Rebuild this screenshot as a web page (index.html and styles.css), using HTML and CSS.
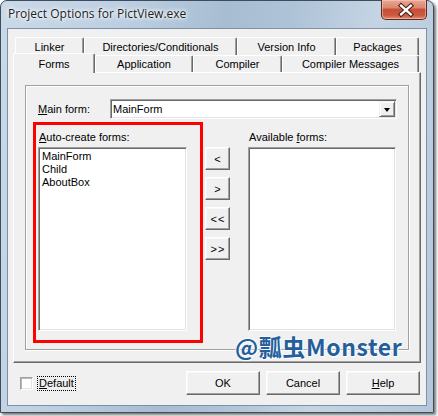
FILE: index.html
```html
<!DOCTYPE html>
<html>
<head>
<meta charset="utf-8">
<link rel="stylesheet" href="styles.css">
</head>
<body>
<div class="window">
  <div class="titlebar">
    <span class="title">Project Options for PictView.exe</span>
    <div class="close">
      <svg width="46" height="20" viewBox="0 0 46 20">
        <path d="M20.5 5.5 L30.5 14.5 M30.5 5.5 L20.5 14.5" stroke="#4a2018" stroke-width="4.6" stroke-linecap="square" fill="none"/>
        <path d="M20.5 5.5 L30.5 14.5 M30.5 5.5 L20.5 14.5" stroke="#ffffff" stroke-width="2.4" stroke-linecap="square" fill="none"/>
      </svg>
    </div>
  </div>
  <div class="client">
    <div class="tabctl">
      <div class="tabrow row1">
        <div class="tab w-linker">Linker</div>
        <div class="tab w-dirs">Directories/Conditionals</div>
        <div class="tab w-ver">Version Info</div>
        <div class="tab w-pkg">Packages</div>
      </div>
      <div class="tabrow row2">
        <div class="tab sel w-forms">Forms</div>
        <div class="tab w-app">Application</div>
        <div class="tab w-comp">Compiler</div>
        <div class="tab w-msg">Compiler Messages</div>
      </div>
      <div class="page">
        <div class="panel">
          <div class="mainrow">
            <div class="lbl mainlbl"><u>M</u>ain form:</div>
            <div class="combo">
              <span class="combotext">MainForm</span>
              <div class="dd"><span class="tri"></span></div>
            </div>
          </div>
          <div class="lists">
            <div class="col colleft">
              <div class="lbl listlbl"><u>A</u>uto-create forms:</div>
              <div class="listbox">
                <div class="item">MainForm</div>
                <div class="item">Child</div>
                <div class="item">AboutBox</div>
              </div>
            </div>
            <div class="btncol">
              <div class="btn sbtn">&lt;</div>
              <div class="btn sbtn">&gt;</div>
              <div class="btn sbtn">&lt;&lt;</div>
              <div class="btn sbtn">&gt;&gt;</div>
            </div>
            <div class="col colright">
              <div class="lbl listlbl">Available <u>f</u>orms:</div>
              <div class="listbox"></div>
            </div>
          </div>
        </div>
      </div>
    </div>
    <div class="footer">
      <div class="check"></div>
      <div class="deflabel"><u>D</u>efault</div>
      <div class="fbtns">
        <div class="btn fbtn">OK</div>
        <div class="btn fbtn">Cancel</div>
        <div class="btn fbtn"><u>H</u>elp</div>
      </div>
    </div>
  </div>
</div>
<div class="redbox"></div>
<div class="watermark">@瓢虫Monster</div>
</body>
</html>
```

FILE: styles.css
```css
html, body {
  margin: 0;
  padding: 0;
}
body {
  background: #ffffff;
  font-family: "Liberation Sans", Arial, sans-serif;
  font-size: 11px;
  color: #000;
  position: relative;
  width: 438px;
  height: 416px;
  overflow: hidden;
}
u { text-decoration: underline; text-underline-offset: 1px; }

.window {
  box-sizing: border-box;
  width: 434px;
  height: 413px;
  border: 1px solid #3f4d5b;
  border-radius: 7px 7px 0 0;
  background: linear-gradient(100deg, #cad9e8 0%, #bccfe2 25%, #a7bdd2 45%, #aec3d7 58%, #c4d4e3 75%, #b4c7da 100%);
  padding: 0 6px 6px 6px;
  box-shadow: 2px 2px 3px rgba(0, 0, 0, 0.55);
  display: flex;
  flex-direction: column;
}

.titlebar {
  height: 27px;
  display: flex;
  align-items: flex-start;
}
.title {
  margin-left: 1px;
  margin-top: 5px;
  font-family: "Open Sans", "Noto Sans", sans-serif;
  font-size: 12px;
  line-height: 16px;
  color: #1b1b1b;
  text-shadow: 0 0 6px #fff, 0 0 4px #fff, 0 0 2px #eef4fa;
}
.close {
  margin-left: auto;
  margin-top: -1px;
  box-sizing: border-box;
  width: 46px;
  height: 20px;
  border: 1px solid #5b2a22;
  border-top: none;
  border-radius: 0 0 5px 5px;
  background: linear-gradient(#e8a896 0%, #db876f 40%, #c84e36 50%, #cc5a3e 80%, #e48d70 100%);
  box-shadow: inset 0 0 0 1px rgba(255, 210, 200, 0.5);
  display: flex;
}
.close svg { display: block; margin-left: -1px; }

.client {
  box-sizing: border-box;
  height: 378px;
  border: 1px solid #7d90a4;
  background: #f0f0f0;
}

.tabctl {
  width: 408px;
  margin: 8px 0 0 5px;
}
.tabrow { display: flex; }
.row1 { height: 18px; padding-left: 2px; }
.row2 { height: 17px; align-items: flex-end; }
.tab {
  box-sizing: border-box;
  height: 100%;
  background: #f0f0f0;
  border-top: 1px solid #fff;
  border-left: 1px solid #fff;
  border-right: 1px solid #696969;
  box-shadow: inset -1px 0 0 #a0a0a0;
  border-radius: 2px 2px 0 0;
  display: flex;
  align-items: center;
  justify-content: center;
  white-space: nowrap;
}
.tab.sel {
  height: 20px;
  margin-bottom: -1px;
  position: relative;
  z-index: 1;
}
.w-linker { width: 69px; }
.w-dirs { width: 153px; }
.w-ver { width: 99px; }
.w-pkg { width: 83px; }
.w-forms { width: 82px; }
.w-app { width: 98px; }
.w-comp { width: 89px; }
.w-msg { width: 137px; }

.page {
  box-sizing: border-box;
  height: 291px;
  border-top: 1px solid #fff;
  border-left: 1px solid #fff;
  border-right: 1px solid #696969;
  border-bottom: 1px solid #696969;
  box-shadow: inset -1px -1px 0 #a0a0a0;
  padding: 12px 0 0 11px;
}

.panel {
  box-sizing: border-box;
  width: 384px;
  height: 265px;
  border: 1px solid #a0a0a0;
  box-shadow: 1px 1px 0 #fff, inset 1px 1px 0 #fff;
  padding: 13px 0 0 12px;
}

.lbl { line-height: 13px; white-space: nowrap; }

.mainrow {
  display: flex;
  align-items: center;
  height: 20px;
}
.mainlbl { width: 72px; }
.combo {
  box-sizing: border-box;
  width: 287px;
  height: 20px;
  background: #fff;
  border: 1px solid;
  border-color: #a0a0a0 #fff #fff #a0a0a0;
  box-shadow: inset 1px 1px 0 #696969, inset -1px -1px 0 #e3e3e3;
  display: flex;
  align-items: center;
  padding: 1px 1px 1px 2px;
}
.combotext { flex: 1; line-height: 13px; }
.dd {
  box-sizing: border-box;
  width: 16px;
  height: 16px;
  background: #f0f0f0;
  border: 1px solid;
  border-color: #f0f0f0 #696969 #696969 #f0f0f0;
  box-shadow: inset 1px 1px 0 #fff, inset -1px -1px 0 #a0a0a0;
  display: flex;
  align-items: center;
  justify-content: center;
}
.tri {
  width: 0;
  height: 0;
  border-left: 3.5px solid transparent;
  border-right: 3.5px solid transparent;
  border-top: 4px solid #000;
  margin-top: 1px;
}

.lists {
  display: flex;
  gap: 18px;
  margin-top: 12px;
}
.col { display: flex; flex-direction: column; }
.colleft { width: 149px; }
.colright { width: 148px; }
.listlbl { margin-bottom: 3px; padding-left: 1px; }
.listbox {
  box-sizing: border-box;
  height: 184px;
  background: #fff;
  border: 1px solid;
  border-color: #a0a0a0 #fff #fff #a0a0a0;
  box-shadow: inset 1px 1px 0 #696969, inset -1px -1px 0 #e3e3e3;
  padding: 2px 0 0 3px;
}
.item { line-height: 13px; white-space: nowrap; }

.btn {
  box-sizing: border-box;
  background: #f0f0f0;
  border: 1px solid;
  border-color: #fff #696969 #696969 #fff;
  box-shadow: inset -1px -1px 0 #a0a0a0, inset 1px 1px 0 #f8f8f8;
  display: flex;
  align-items: center;
  justify-content: center;
  white-space: nowrap;
}
.btncol {
  display: flex;
  flex-direction: column;
  gap: 7px;
  padding-top: 16px;
}
.sbtn {
  width: 25px;
  height: 23px;
  letter-spacing: 1px;
  padding-left: 1px;
}

.footer {
  display: flex;
  align-items: center;
  height: 24px;
  margin-top: 8px;
  padding: 0 6px 0 12px;
}
.check {
  box-sizing: border-box;
  width: 13px;
  height: 13px;
  background: #fff;
  border: 1px solid;
  border-color: #a0a0a0 #fff #fff #a0a0a0;
  box-shadow: inset 1px 1px 0 #b8b8b8, inset -1px -1px 0 #e3e3e3;
}
.deflabel {
  margin-left: 4px;
  border: 1px dotted #000;
  padding: 0 1px;
  line-height: 13px;
}
.fbtns {
  margin-left: auto;
  display: flex;
  gap: 6px;
}
.fbtn {
  width: 74px;
  height: 24px;
}

.redbox {
  position: absolute;
  left: 33px;
  top: 122px;
  width: 170px;
  height: 221px;
  box-sizing: border-box;
  border: 3px solid #ff0000;
}
.watermark {
  position: absolute;
  left: 235px;
  top: 333px;
  font-family: "Noto Sans CJK SC", "Noto Sans", sans-serif;
  font-weight: 700;
  font-size: 23px;
  line-height: 26px;
  letter-spacing: 0.6px;
  color: #245f9c;
  white-space: nowrap;
  text-shadow: 0 0 2px #fff, 0 0 2px #fff, 1px 1px 1px #fff;
}
```
